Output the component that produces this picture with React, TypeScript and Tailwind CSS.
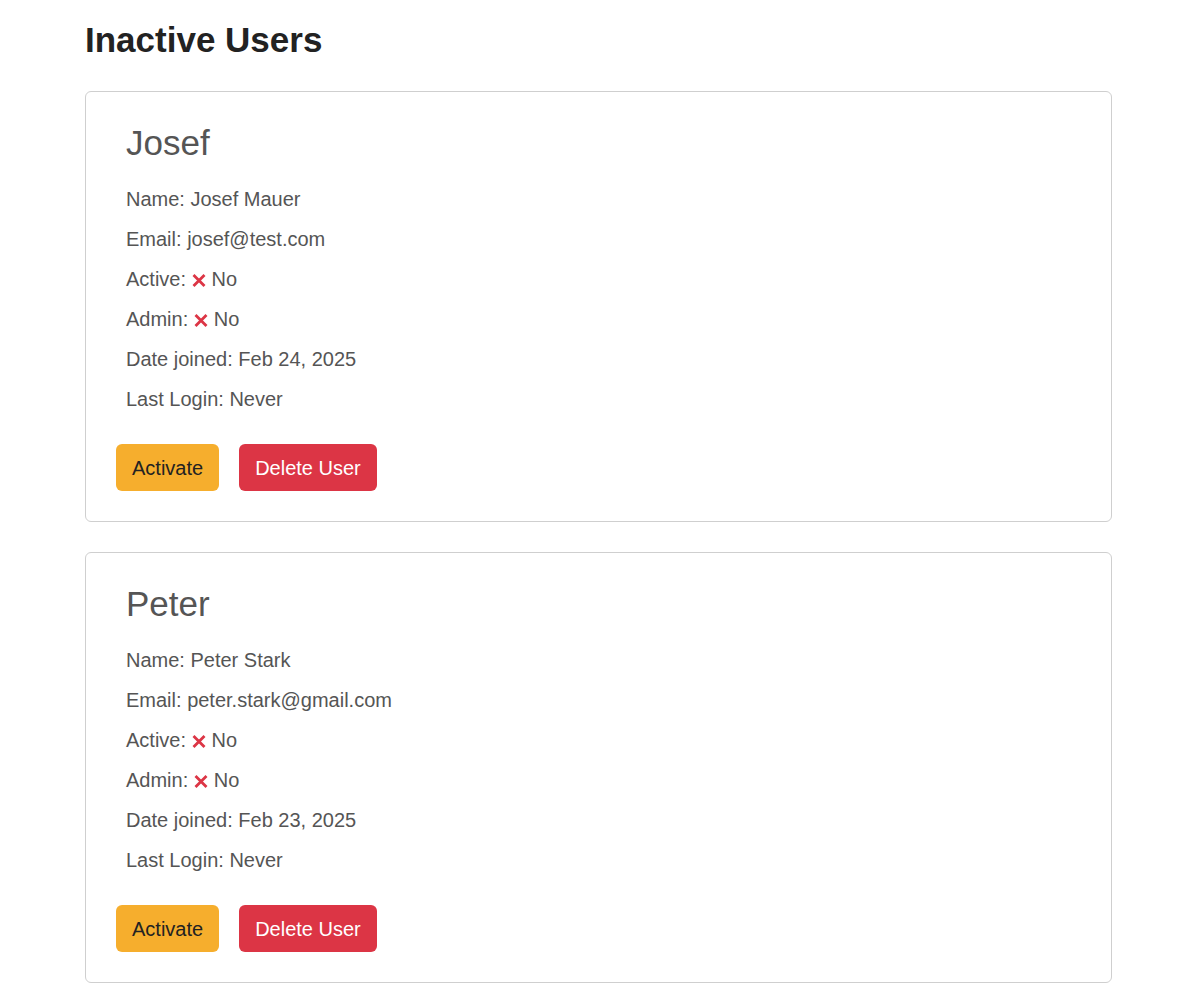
import React from 'react';

interface User {
  username: string;
  fullName: string;
  email: string;
  dateJoined: string;
  lastLogin: string;
}

const USERS: User[] = [
  { username: 'Josef', fullName: 'Josef Mauer', email: 'josef@test.com', dateJoined: 'Feb 24, 2025', lastLogin: 'Never' },
  { username: 'Peter', fullName: 'Peter Stark', email: 'peter.stark@gmail.com', dateJoined: 'Feb 23, 2025', lastLogin: 'Never' },
];

// red "✕" mark used for the boolean fields
function Cross() {
  return (
    <svg className="mr-[6px] inline-block h-[13px] w-[14px] align-[-1px]" viewBox="0 0 14 13" aria-hidden="true">
      <path d="M1.5 1L12.5 12M12.5 1L1.5 12" stroke="#dc3545" strokeWidth="2.8" />
    </svg>
  );
}

function Line({ children }: { children: React.ReactNode }) {
  return <p className="pl-[10px] text-[20px] leading-[30px]">{children}</p>;
}

function UserCard({ user }: { user: User }) {
  return (
    <div className="rounded-[6px] border border-[#cfcfcf] px-[30px] py-[30px] text-[#555]">
      <h2 className="pl-[10px] text-[35px] font-normal leading-[42px]">{user.username}</h2>
      <div className="mt-[20px] flex flex-col gap-[10px]">
        <Line>Name: {user.fullName}</Line>
        <Line>Email: {user.email}</Line>
        <Line>
          Active: <Cross />No
        </Line>
        <Line>
          Admin: <Cross />No
        </Line>
        <Line>Date joined: {user.dateJoined}</Line>
        <Line>Last Login: {user.lastLogin}</Line>
      </div>
      <div className="mt-[30px] flex gap-[20px]">
        <button
          type="button"
          className="h-[47px] rounded-[6px] bg-[#f6ae2d] px-[16px] text-[20px] text-[#222]"
        >
          Activate
        </button>
        <button
          type="button"
          className="h-[47px] rounded-[6px] bg-[#dc3545] px-[16px] text-[20px] text-white"
        >
          Delete User
        </button>
      </div>
    </div>
  );
}

export default function App() {
  return (
    <div className="min-h-screen bg-white font-['Liberation_Sans',Arial,sans-serif]">
      <div className="ml-[85px] w-[1027px] pt-[19px] pb-[16px]">
        <h1 className="text-[35px] font-bold leading-[42px] text-[#222]">Inactive Users</h1>
        <div className="mt-[30px] flex flex-col gap-[30px]">
          {USERS.map((u) => (
            <UserCard key={u.username} user={u} />
          ))}
        </div>
      </div>
    </div>
  );
}
